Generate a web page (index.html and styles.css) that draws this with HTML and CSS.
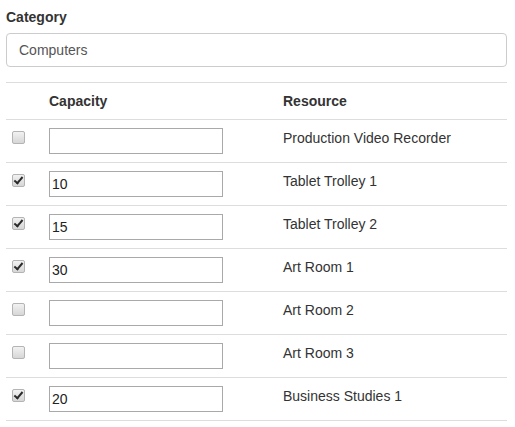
FILE: index.html
```html
<!DOCTYPE html>
<html>
<head>
<meta charset="utf-8">
<link rel="stylesheet" href="styles.css">
</head>
<body>
<div class="page">
  <div class="form-group">
    <label class="label">Category</label>
    <input class="form-control" type="text" value="Computers">
  </div>
  <table class="table">
    <thead>
      <tr><th class="col-check"></th><th class="col-cap">Capacity</th><th>Resource</th></tr>
    </thead>
    <tbody>
      <tr><td><input class="cb" type="checkbox"></td><td><input class="cap" type="text" value=""></td><td>Production Video Recorder</td></tr>
      <tr><td><input class="cb" type="checkbox" checked></td><td><input class="cap" type="text" value="10"></td><td>Tablet Trolley 1</td></tr>
      <tr><td><input class="cb" type="checkbox" checked></td><td><input class="cap" type="text" value="15"></td><td>Tablet Trolley 2</td></tr>
      <tr><td><input class="cb" type="checkbox" checked></td><td><input class="cap" type="text" value="30"></td><td>Art Room 1</td></tr>
      <tr><td><input class="cb" type="checkbox"></td><td><input class="cap" type="text" value=""></td><td>Art Room 2</td></tr>
      <tr><td><input class="cb" type="checkbox"></td><td><input class="cap" type="text" value=""></td><td>Art Room 3</td></tr>
      <tr><td><input class="cb" type="checkbox" checked></td><td><input class="cap" type="text" value="20"></td><td>Business Studies 1</td></tr>
    </tbody>
  </table>
</div>
</body>
</html>
```
FILE: styles.css
```css
html, body {
  margin: 0;
  padding: 0;
  background: #fff;
}
body {
  font-family: "Liberation Sans", Arial, sans-serif;
  font-size: 14px;
  line-height: 20px;
  color: #333;
}
.page {
  width: 501px;
  padding: 7px 8px 0 6px;
}
.form-group {
  margin-bottom: 15px;
}
.label {
  display: block;
  font-weight: bold;
  margin-bottom: 6px;
}
.form-control {
  display: block;
  box-sizing: border-box;
  width: 100%;
  height: 34px;
  margin: 0;
  padding: 6px 12px;
  font-family: inherit;
  font-size: 14px;
  line-height: 20px;
  color: #555;
  background: #fff;
  border: 1px solid #ccc;
  border-radius: 4px;
  outline: none;
}
.table {
  width: 501px;
  border-collapse: collapse;
  table-layout: fixed;
}
.table th, .table td {
  padding: 8px;
  text-align: left;
  vertical-align: top;
  border-top: 1px solid #ddd;
}
.table th {
  font-weight: bold;
}
.table tbody tr:last-child td {
  border-bottom: 1px solid #ddd;
}
.col-check {
  width: 19px;
}
.col-cap {
  width: 218px;
}
.cap {
  display: block;
  box-sizing: border-box;
  width: 174px;
  height: 26px;
  margin: 0;
  padding: 1px 2px;
  font-family: "Liberation Sans", Arial, sans-serif;
  font-size: 14px;
  color: #222;
  background: #fff;
  border: 1px solid #a9a9a9;
  outline: none;
}
.table td:first-child {
  padding-left: 6px;
}
.cb {
  -webkit-appearance: none;
  appearance: none;
  position: relative;
  display: block;
  width: 13px;
  height: 13px;
  margin: 3px 0 0 0;
  border: 1px solid #b4b4b4;
  border-radius: 2px;
  background: linear-gradient(#f2f2f2, #d6d6d6);
  box-sizing: border-box;
}
.cb:checked::after {
  content: "";
  position: absolute;
  left: 3px;
  top: 0px;
  width: 3px;
  height: 7px;
  border-right: 2px solid #2b2b2b;
  border-bottom: 2px solid #2b2b2b;
  transform: rotate(40deg);
}
```
